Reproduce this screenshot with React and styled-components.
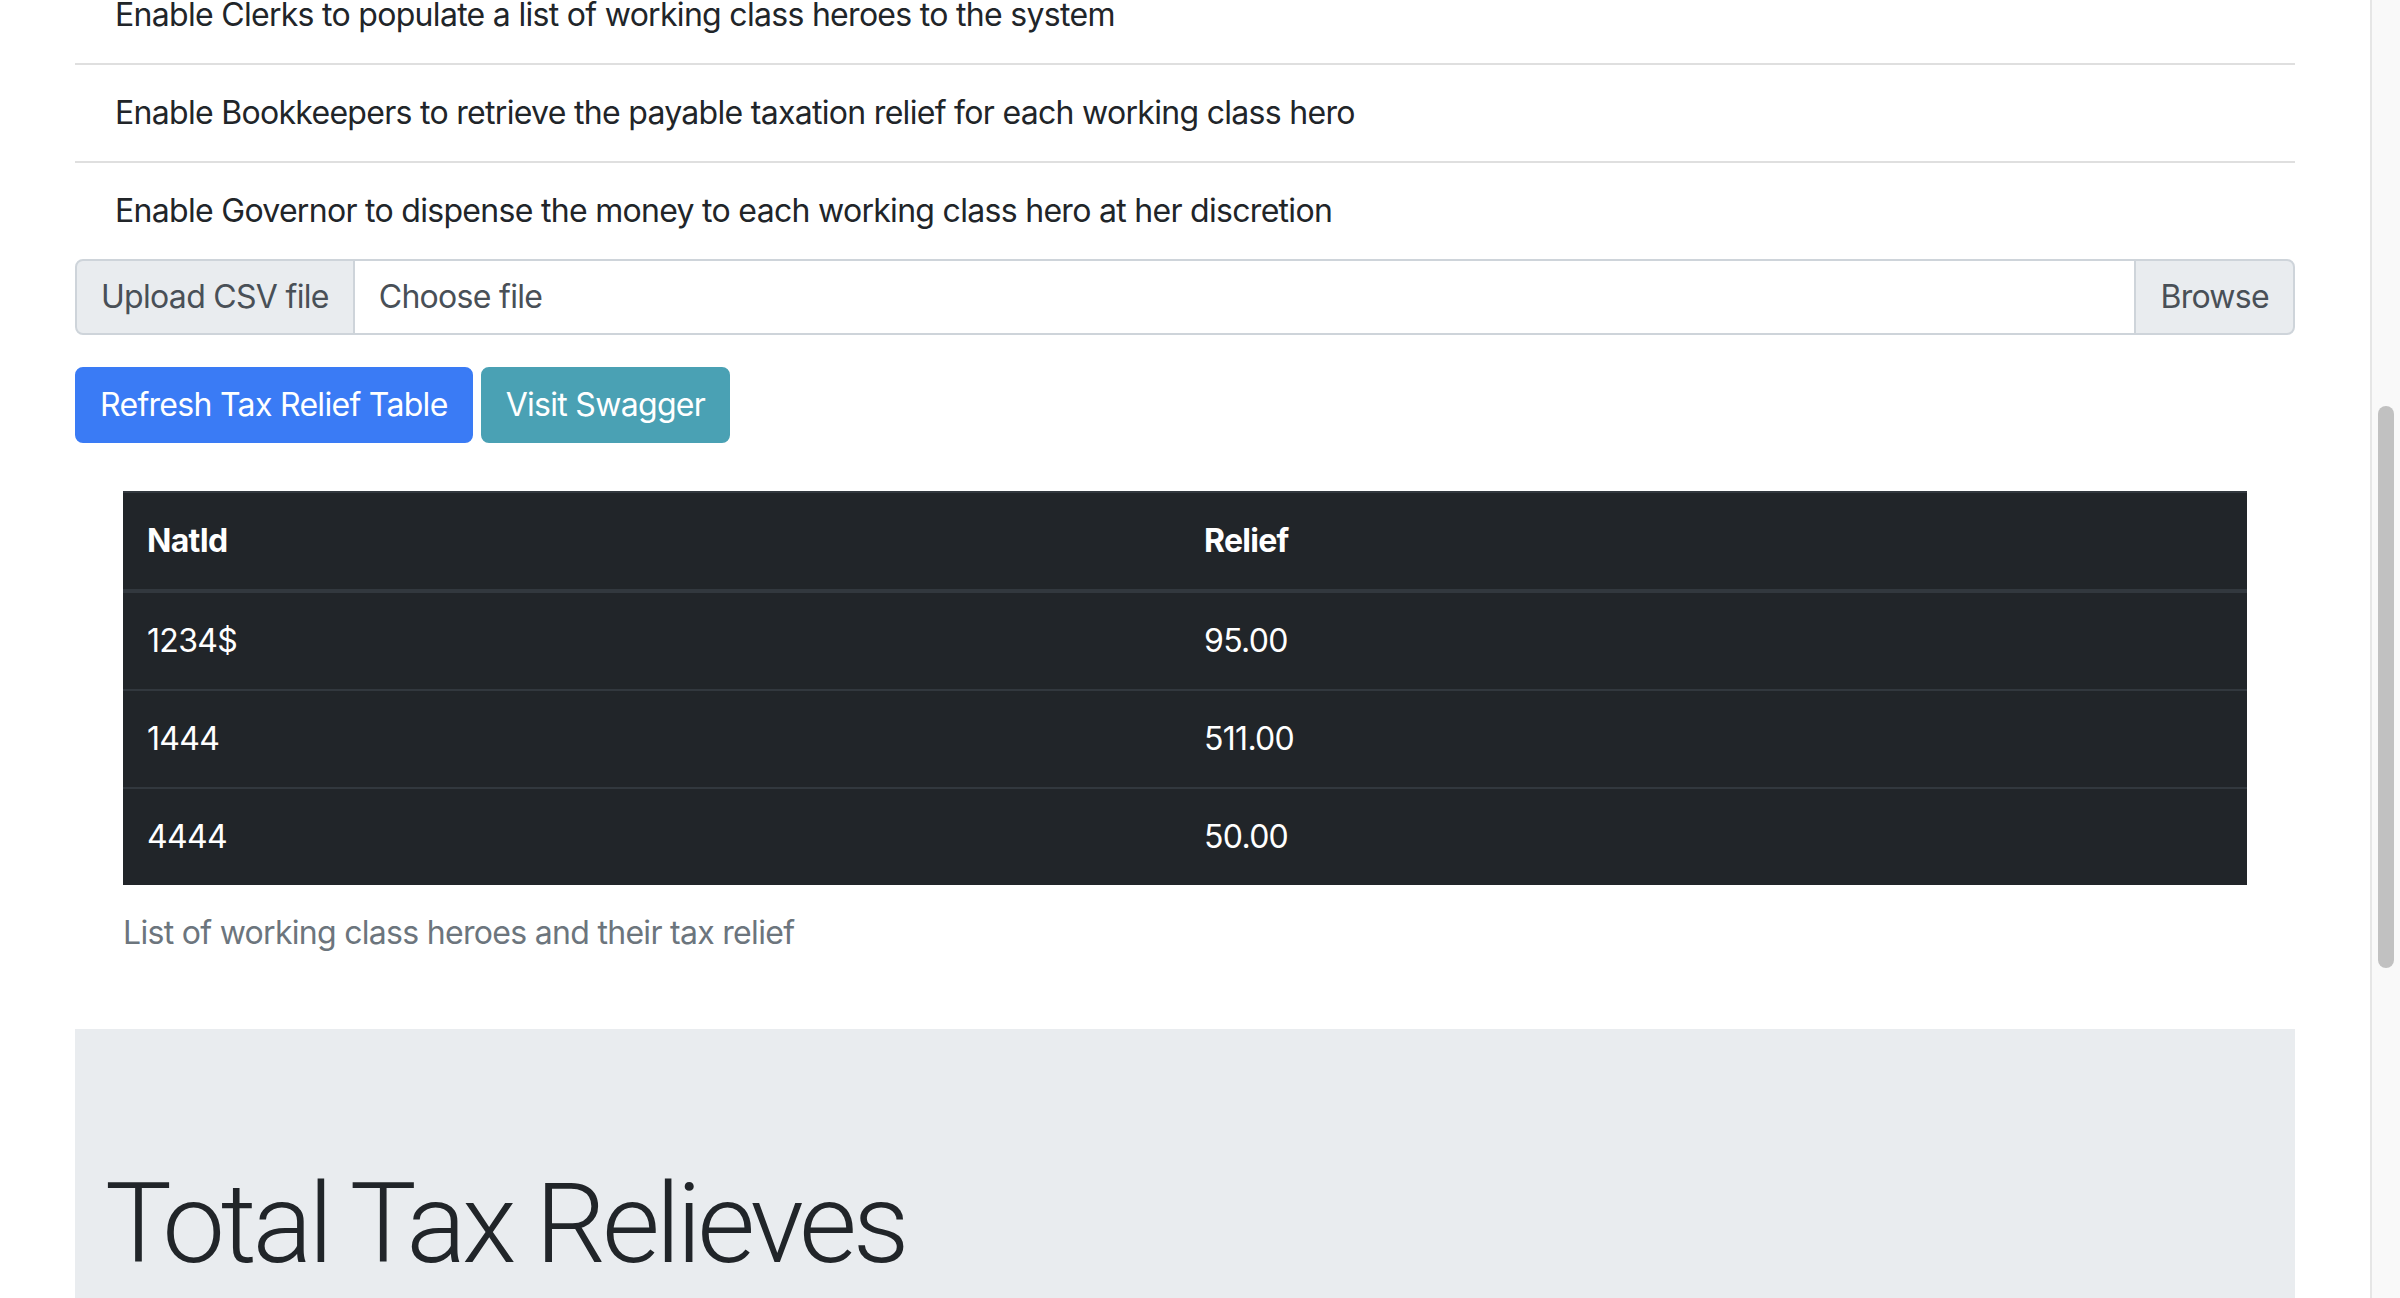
import React from 'react';
import styled, { createGlobalStyle } from 'styled-components';

const GlobalStyle = createGlobalStyle`
  html, body {
    margin: 0;
    padding: 0;
    background: #ffffff;
    overflow: hidden;
  }
  body {
    font-family: Inter, "Liberation Sans", sans-serif;
    color: #212529;
    letter-spacing: -0.7px;
  }
`;

const Window = styled.div`
  display: flex;
  height: 100vh;
  overflow: hidden;
`;

const Page = styled.main`
  flex: 1;
  padding: 0 75px;
  overflow: hidden;
`;

const ScrollTrack = styled.div`
  width: 30px;
  box-sizing: border-box;
  background: #f9f9f9;
  border-left: 2px solid #e6e6e6;
  padding: 406px 0 0 6px;
`;

const ScrollThumb = styled.div`
  width: 16px;
  height: 562px;
  border-radius: 8px;
  background: #c1c1c1;
`;

const Stories = styled.ul`
  list-style: none;
  margin: -33px 0 0;
  padding: 0;
`;

const Story = styled.li`
  padding: 24px 40px;
  font-size: 32px;
  line-height: 48px;
  border-bottom: 2px solid #dfdfdf;

  &:last-child {
    border-bottom: 0;
  }
`;

const UploadGroup = styled.div`
  display: flex;
  height: 76px;
  font-size: 32px;
  line-height: 48px;
  color: #495057;
`;

const Addon = styled.div`
  display: flex;
  align-items: center;
  padding: 12px 24px;
  background: #e9ecef;
  border: 2px solid #ced4da;
  border-radius: ${p => (p.$side === 'left' ? '8px 0 0 8px' : '0 8px 8px 0')};
`;

const FileLabel = styled.div`
  flex: 1;
  display: flex;
  align-items: center;
  padding: 12px 24px;
  border-top: 2px solid #ced4da;
  border-bottom: 2px solid #ced4da;
  background: #ffffff;
`;

const Actions = styled.div`
  display: flex;
  gap: 8px;
  margin-top: 32px;
`;

const Button = styled.button`
  font-family: inherit;
  letter-spacing: inherit;
  font-size: 32px;
  line-height: 48px;
  padding: 12px 23px;
  border: 2px solid ${p => p.$bg};
  background: ${p => p.$bg};
  color: #ffffff;
  border-radius: 8px;
  cursor: pointer;
`;

const TableWrap = styled.div`
  margin: 48px 48px 0;
`;

const Table = styled.table`
  width: 100%;
  table-layout: fixed;
  border-collapse: collapse;
  background: #212529;
  color: #ffffff;
  font-size: 32px;
  line-height: 48px;

  caption {
    caption-side: bottom;
    text-align: left;
    padding: 24px 0;
    color: #6c757d;
    background: #ffffff;
  }
`;

const Th = styled.th`
  text-align: left;
  font-weight: 700;
  padding: 24px;
  border-top: 2px solid #32383e;
  border-bottom: 4px solid #32383e;
`;

const Td = styled.td`
  padding: 24px;
  border-top: 2px solid #32383e;
`;

const Jumbotron = styled.section`
  margin-top: 48px;
  background: #e9ecef;
  padding: 128px 30px;
`;

const Display = styled.h1`
  margin: 0;
  font-family: Roboto, Inter, sans-serif;
  font-size: 112px;
  font-weight: 300;
  line-height: 1.2;
  color: #212529;
  letter-spacing: -4.3px;
`;

const stories = [
  'Enable Clerks to populate a list of working class heroes to the system',
  'Enable Bookkeepers to retrieve the payable taxation relief for each working class hero',
  'Enable Governor to dispense the money to each working class hero at her discretion',
];

const reliefs = [
  { natId: '1234$', relief: '95.00' },
  { natId: '1444', relief: '511.00' },
  { natId: '4444', relief: '50.00' },
];

export default function App() {
  return (
    <Window>
      <GlobalStyle />
      <Page>
        <Stories>
          {stories.map(s => (
            <Story key={s}>{s}</Story>
          ))}
        </Stories>

        <UploadGroup>
          <Addon $side="left">Upload CSV file</Addon>
          <FileLabel>Choose file</FileLabel>
          <Addon $side="right">Browse</Addon>
        </UploadGroup>

        <Actions>
          <Button $bg="#3a7bf5">Refresh Tax Relief Table</Button>
          <Button $bg="#4aa1b4">Visit Swagger</Button>
        </Actions>

        <TableWrap>
          <Table>
            <caption>List of working class heroes and their tax relief</caption>
            <colgroup>
              <col style={{ width: '1057px' }} />
              <col />
            </colgroup>
            <thead>
              <tr>
                <Th>NatId</Th>
                <Th>Relief</Th>
              </tr>
            </thead>
            <tbody>
              {reliefs.map(r => (
                <tr key={r.natId}>
                  <Td>{r.natId}</Td>
                  <Td>{r.relief}</Td>
                </tr>
              ))}
            </tbody>
          </Table>
        </TableWrap>

        <Jumbotron>
          <Display>Total Tax Relieves</Display>
        </Jumbotron>
      </Page>
      <ScrollTrack>
        <ScrollThumb />
      </ScrollTrack>
    </Window>
  );
}
